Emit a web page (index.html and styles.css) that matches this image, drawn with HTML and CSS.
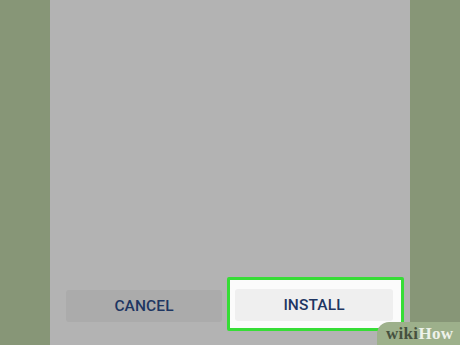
FILE: index.html
```html
<!DOCTYPE html>
<html>
<head>
<meta charset="utf-8">
<link rel="stylesheet" href="styles.css">
</head>
<body>
<div class="stage">
  <div class="panel">
    <div class="actions">
      <div class="btn cancel">CANCEL</div>
      <div class="btn install">
        <span class="highlight"></span>
        <span class="label">INSTALL</span>
      </div>
    </div>
  </div>
  <div class="watermark"><span class="wiki">wiki</span><span class="how">How</span></div>
</div>
</body>
</html>
```
FILE: styles.css
```css
html, body {
  margin: 0;
  padding: 0;
}
body {
  width: 460px;
  height: 345px;
  overflow: hidden;
  background: #879677;
  font-family: Roboto, "Liberation Sans", sans-serif;
}
.stage {
  position: relative;
  width: 460px;
  height: 345px;
}
.panel {
  margin-left: 50px;
  width: 360px;
  height: 345px;
  background: #b3b3b3;
  display: flex;
  flex-direction: column;
  justify-content: flex-end;
}
.actions {
  display: flex;
  padding: 0 17px 23px 16px;
  gap: 13px;
}
.btn {
  height: 32px;
  border-radius: 3px;
  display: flex;
  align-items: center;
  justify-content: center;
  font-size: 15.5px;
  font-weight: 500;
  color: #1e3662;
  letter-spacing: 0.1px;
}
.cancel {
  width: 156px;
  background: #ababab;
}
.install {
  width: 158px;
  position: relative;
  background: #efefef;
  margin-top: -1px;
}
.highlight {
  position: absolute;
  left: -8px;
  right: -11px;
  top: -12px;
  bottom: -10px;
  border: 3px solid #36dd36;
  border-radius: 2px;
  background: #fbfbfb;
  z-index: 0;
}
.install::after {
  content: "";
  position: absolute;
  inset: 0;
  background: #efefef;
  border-radius: 3px;
  z-index: 1;
}
.label {
  position: relative;
  z-index: 2;
}
.watermark {
  position: absolute;
  right: 0;
  bottom: 0;
  width: 83px;
  height: 23px;
  background: #9db08b;
  border-top-left-radius: 12px;
  font-family: "Liberation Serif", "DejaVu Serif", serif;
  font-weight: bold;
  font-size: 17px;
  letter-spacing: 0.3px;
  line-height: 23px;
  padding-left: 9px;
  box-sizing: border-box;
}
.wiki {
  color: #46513f;
}
.how {
  color: #eef2ea;
}
```
